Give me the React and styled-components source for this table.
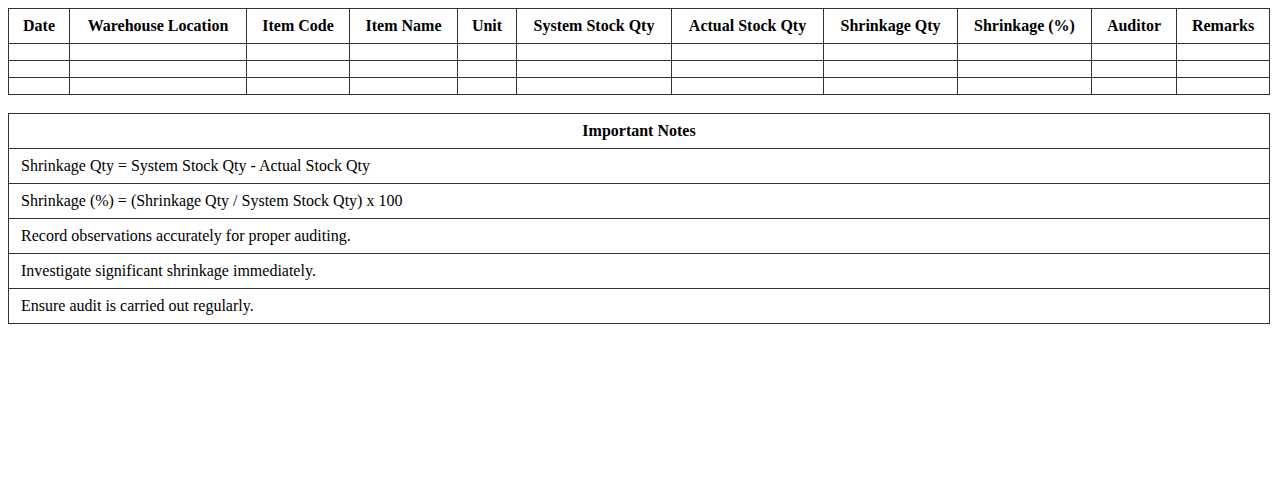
import React from "react";
import styled, { createGlobalStyle } from "styled-components";

const Global = createGlobalStyle`
  body {
    margin: 8px;
    font-family: "Liberation Serif", "Times New Roman", serif;
    color: #000;
    background: #fff;
  }
`;

const Table = styled.table`
  width: 100%;
  border-collapse: collapse;
  table-layout: ${(p) => (p.$fixed ? "fixed" : "auto")};
  font-size: 16px;
  margin-bottom: ${(p) => p.$mb || 0}px;
`;

const Col = styled.col`
  width: ${(p) => (p.$w ? `${p.$w}px` : "auto")};
`;

const Th = styled.th`
  border: 1px solid #333;
  padding: 8px;
  font-weight: bold;
  text-align: center;
  white-space: nowrap;
`;

const EmptyCell = styled.td`
  border: 1px solid #333;
  padding: 8px;
`;

const Td = styled.td`
  border: 1px solid #333;
  padding: 8px 12px;
  text-align: left;
`;

const headers = [
  ["Date", 61],
  ["Warehouse Location", 177],
  ["Item Code", 103],
  ["Item Name", 108],
  ["Unit", 59],
  ["System Stock Qty", 155],
  ["Actual Stock Qty", 152],
  ["Shrinkage Qty", 134],
  ["Shrinkage (%)", 134],
  ["Auditor", 85],
  ["Remarks", 0],
];

const notes = [
  "Shrinkage Qty = System Stock Qty - Actual Stock Qty",
  "Shrinkage (%) = (Shrinkage Qty / System Stock Qty) x 100",
  "Record observations accurately for proper auditing.",
  "Investigate significant shrinkage immediately.",
  "Ensure audit is carried out regularly.",
];

export default function App() {
  return (
    <>
      <Global />
      <Table $mb={18} $fixed>
        <colgroup>
          {headers.map(([h, w]) => (
            <Col key={h} $w={w} />
          ))}
        </colgroup>
        <thead>
          <tr>
            {headers.map(([h]) => (
              <Th key={h}>{h}</Th>
            ))}
          </tr>
        </thead>
        <tbody>
          {[0, 1, 2].map((r) => (
            <tr key={r}>
              {headers.map(([h]) => (
                <EmptyCell key={h} />
              ))}
            </tr>
          ))}
        </tbody>
      </Table>
      <Table>
        <thead>
          <tr>
            <Th>Important Notes</Th>
          </tr>
        </thead>
        <tbody>
          {notes.map((n) => (
            <tr key={n}>
              <Td>{n}</Td>
            </tr>
          ))}
        </tbody>
      </Table>
    </>
  );
}
